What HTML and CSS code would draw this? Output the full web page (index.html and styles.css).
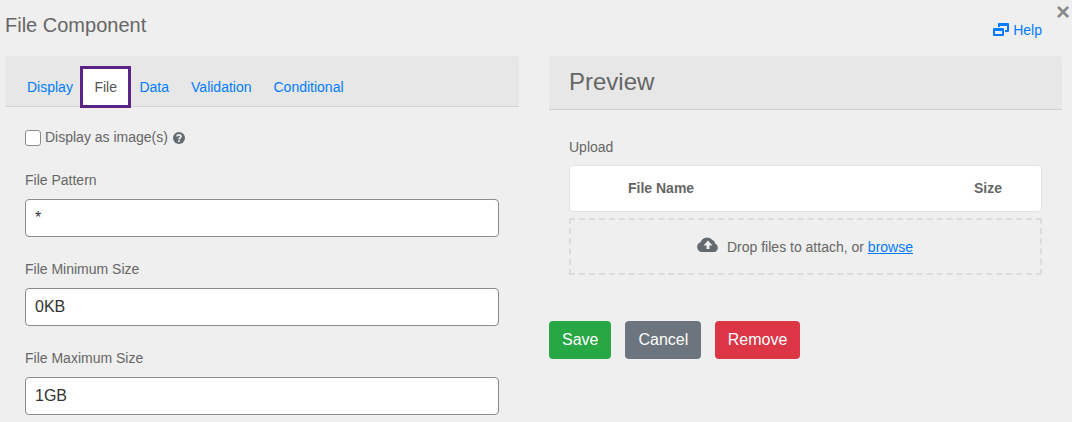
FILE: index.html
```html
<!DOCTYPE html>
<html lang="en">
<head>
    <meta charset="UTF-8">
    <title>File Component</title>
    <link rel="stylesheet" href="styles.css">
</head>
<body>
    <a class="close-button" href="#">&times;</a>

    <div class="page-header">
        <h1>File Component</h1>
        <a class="help-link" href="#">
            <svg class="help-icon" width="16" height="13" viewBox="0 0 16 13">
                <path fill="#007bff" fill-rule="evenodd" d="M5 1a1 1 0 0 1 1-1h9a1 1 0 0 1 1 1v7a1 1 0 0 1-1 1h-3V7h2V3H7v1H5V1zM1 5h9a1 1 0 0 1 1 1v6a1 1 0 0 1-1 1H1a1 1 0 0 1-1-1V6a1 1 0 0 1 1-1zm1 3v3h7V8H2z"/>
            </svg>
            Help
        </a>
    </div>

    <div class="columns">
        <div class="settings-column">
            <ul class="tabs">
                <li><a href="#">Display</a></li>
                <li><a class="active" href="#">File</a></li>
                <li><a href="#">Data</a></li>
                <li><a href="#">Validation</a></li>
                <li><a href="#">Conditional</a></li>
            </ul>
            <div class="tab-body">
                <label class="check-row">
                    <input type="checkbox">
                    <span>Display as image(s)</span>
                    <svg class="hint-icon" width="12" height="12" viewBox="0 0 12 12">
                        <circle cx="6" cy="6" r="6" fill="#646a70"/>
                        <path fill="none" stroke="#efefef" stroke-width="1.7" d="M4 4.600C4 3.400 4.900 2.800 6 2.800s2 .7 2 1.700c0 1.500-2 1.400-2 3"/>
                        <rect x="5.100" y="8.200" width="1.800" height="1.700" fill="#efefef"/>
                    </svg>
                </label>
                <div class="form-group">
                    <label for="pattern">File Pattern</label>
                    <input id="pattern" type="text" value="*">
                </div>
                <div class="form-group">
                    <label for="minsize">File Minimum Size</label>
                    <input id="minsize" type="text" value="0KB">
                </div>
                <div class="form-group">
                    <label for="maxsize">File Maximum Size</label>
                    <input id="maxsize" type="text" value="1GB">
                </div>
            </div>
        </div>

        <div class="preview-column">
            <div class="preview-header">Preview</div>
            <div class="preview-body">
                <div class="upload-label">Upload</div>
                <div class="file-table">
                    <span class="file-name">File Name</span>
                    <span class="file-size">Size</span>
                </div>
                <div class="dropzone">
                    <svg class="cloud-icon" width="22" height="16" viewBox="0 0 22 16">
                        <path fill="#646a70" fill-rule="evenodd" d="M5 16A5 5 0 0 1 3.500 6.300 7 7 0 0 1 15.500 4 3.500 3.500 0 0 1 18 7.500 4.500 4.500 0 0 1 17.500 16H5zM11 4.500L6.500 9.500H9.500v3.500h3V9.500h3L11 4.500z"/>
                    </svg>
                    <span class="drop-text">Drop files to attach, or <a href="#">browse</a></span>
                </div>
            </div>
            <div class="button-row">
                <button class="btn btn-save">Save</button>
                <button class="btn btn-cancel">Cancel</button>
                <button class="btn btn-remove">Remove</button>
            </div>
        </div>
    </div>
</body>
</html>
```

FILE: styles.css
```css
html, body {
    height: 422px;
    overflow: hidden;
}
body {
    font-family: "Liberation Sans", Arial, sans-serif;
    font-size: 14px;
    line-height: 21px;
    margin: 0;
    padding: 0;
    background-color: #efefef;
    color: #666;
    position: relative;
}
a {
    color: #007bff;
    text-decoration: none;
}
.close-button {
    position: absolute;
    top: 1px;
    right: 2px;
    font-size: 24px;
    font-weight: bold;
    line-height: 21px;
    color: #8a8a8a;
}
.page-header {
    height: 56px;
    padding: 0 30px 0 5px;
    display: flex;
    justify-content: space-between;
}
.page-header h1 {
    margin: 13px 0 0;
    font-size: 20px;
    font-weight: normal;
    line-height: 24px;
}
.help-link {
    margin-top: 20px;
    display: flex;
    align-items: center;
    gap: 4px;
    height: 21px;
}
.help-icon {
    margin-top: -2px;
}
.columns {
    display: grid;
    grid-template-columns: 514px 513px;
    column-gap: 30px;
    padding-left: 5px;
}
.tabs {
    list-style: none;
    margin: 0;
    padding: 13px 0 0;
    height: 37px;
    display: flex;
    background-color: #e7e7e7;
    border-bottom: 1px solid #d2d2d2;
    border-radius: 3px 3px 0 0;
}
.tabs a {
    display: block;
    padding: 8px 11px 7px;
    height: 36px;
    box-sizing: border-box;
}
.tabs li:first-child {
    margin-left: 11px;
}
.tabs a.active {
    margin: 0 .5px 0 -.5px;
    background-color: #fff;
    color: #555;
    outline: 3px solid #5b2386;
}
.tab-body {
    padding: 20px 20px 0;
}
.check-row {
    display: flex;
    align-items: center;
    height: 21px;
}
.check-row input {
    appearance: none;
    width: 16px;
    height: 16px;
    margin: 0 4px 0 0;
    background-color: #fff;
    border: 1px solid #8c8c8c;
    border-radius: 3px;
}
.hint-icon {
    margin-left: 5px;
}
.form-group {
    margin-top: 22px;
}
.form-group label {
    display: block;
    margin-bottom: 8px;
}
.form-group input {
    display: block;
    width: 100%;
    height: 38px;
    box-sizing: border-box;
    padding: 6px 9px;
    font-family: inherit;
    font-size: 16px;
    color: #333;
    background-color: #fff;
    border: 1px solid #8c8c8c;
    border-radius: 4px;
}
.preview-header {
    height: 53px;
    padding-left: 20px;
    font-size: 24px;
    line-height: 52px;
    background-color: #e7e7e7;
    border-bottom: 1px solid #d2d2d2;
    border-radius: 3px 3px 0 0;
}
.preview-body {
    padding: 27px 20px 0;
}
.upload-label {
    margin-bottom: 7px;
}
.file-table {
    height: 47px;
    box-sizing: border-box;
    display: flex;
    justify-content: space-between;
    align-items: center;
    padding: 0 39px 1px 58px;
    font-weight: bold;
    background-color: #fff;
    border: 1px solid #e2e2e2;
    border-radius: 4px;
}
.dropzone {
    margin-top: 6px;
    height: 57px;
    box-sizing: border-box;
    display: flex;
    justify-content: center;
    align-items: center;
    gap: 8px;
    padding-right: 1px;
    border: 2px dashed #dcdcdc;
}
.dropzone a {
    text-decoration: underline;
}
.drop-text {
    margin-top: 2px;
}
.cloud-icon {
    margin-top: -6px;
}
.button-row {
    margin-top: 46px;
    display: flex;
    gap: 14px;
}
.btn {
    height: 38px;
    padding: 0 13px;
    font-family: inherit;
    font-size: 16px;
    color: #fff;
    border: none;
    border-radius: 4px;
}
.btn-save {
    background-color: #28a745;
}
.btn-cancel {
    background-color: #6c757d;
}
.btn-remove {
    padding: 0 12.5px;
    background-color: #dc3545;
}
```
